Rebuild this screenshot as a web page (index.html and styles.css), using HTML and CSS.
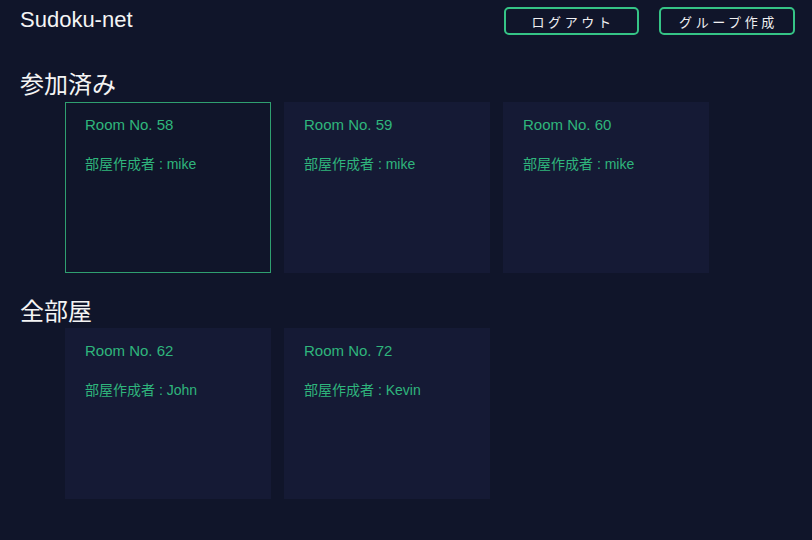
FILE: index.html
```html
<!DOCTYPE html>
<html lang="ja">
<head>
<meta charset="utf-8">
<title>Sudoku-net</title>
<link rel="stylesheet" href="styles.css">
</head>
<body>
<header class="header">
  <div class="logo">Sudoku-net</div>
  <div class="actions">
    <button class="btn">ログアウト</button>
    <button class="btn btn-wide">グループ作成</button>
  </div>
</header>
<main>
  <section class="section">
    <h2 class="section-title">参加済み</h2>
    <div class="grid">
      <div class="card card-active">
        <div class="room">Room No. 58</div>
        <div class="owner">部屋作成者 : mike</div>
      </div>
      <div class="card">
        <div class="room">Room No. 59</div>
        <div class="owner">部屋作成者 : mike</div>
      </div>
      <div class="card">
        <div class="room">Room No. 60</div>
        <div class="owner">部屋作成者 : mike</div>
      </div>
    </div>
  </section>
  <section class="section section-2">
    <h2 class="section-title">全部屋</h2>
    <div class="grid">
      <div class="card">
        <div class="room">Room No. 62</div>
        <div class="owner">部屋作成者 : John</div>
      </div>
      <div class="card">
        <div class="room">Room No. 72</div>
        <div class="owner">部屋作成者 : Kevin</div>
      </div>
    </div>
  </section>
</main>
</body>
</html>
```

FILE: styles.css
```css
* { box-sizing: border-box; }
html, body { margin: 0; padding: 0; }
body {
  width: 812px;
  height: 540px;
  overflow: hidden;
  background: #10152a;
  color: #f2f2f2;
  font-family: "Liberation Sans", "Noto Sans CJK JP", sans-serif;
}
.header {
  display: flex;
  align-items: center;
  justify-content: space-between;
  padding: 7px 17px 0 20px;
  height: 35px;
}
.logo {
  font-size: 22px;
  line-height: 28px;
  color: #f4f4f4;
  margin-top: -2px;
}
.actions {
  display: flex;
  gap: 20px;
}
.btn {
  width: 135px;
  height: 28px;
  background: transparent;
  border: 2px solid #35c486;
  border-radius: 5px;
  color: #f0f0f2;
  font-family: "Noto Sans CJK JP", sans-serif;
  font-size: 13px;
  letter-spacing: 3.6px;
  padding: 0 0 0 3px;
  cursor: pointer;
}
.btn-wide { width: 136px; }
.section-title {
  margin: 32px 0 3px 20px;
  font-weight: normal;
  font-size: 24px;
  line-height: 32px;
  color: #f4f4f4;
  font-family: "Noto Sans CJK JP", sans-serif;
}
.section-2 .section-title { margin-top: 21px; margin-bottom: 2px; }
.grid {
  display: grid;
  grid-template-columns: repeat(3, 206px);
  gap: 13px;
  padding-left: 65px;
}
.card {
  height: 171px;
  background: #151a35;
  padding: 14px 20px;
  color: #2fb57c;
}
.card-active {
  background: #10152a;
  border: 1px solid #2f9f70;
  padding: 13px 19px;
}
.room {
  font-size: 15px;
  line-height: 18px;
}
.owner {
  margin-top: 21px;
  font-size: 14px;
  line-height: 18px;
  font-family: "Liberation Sans", "Noto Sans CJK JP", sans-serif;
}
```
